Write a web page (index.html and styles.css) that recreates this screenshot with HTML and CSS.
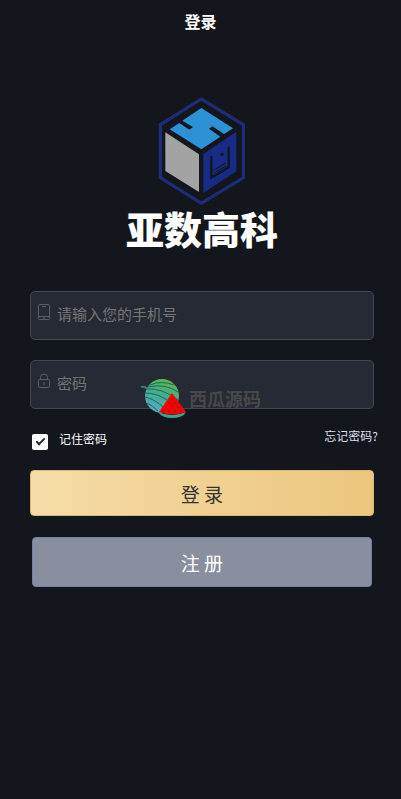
FILE: index.html
```html
<!DOCTYPE html>
<html lang="zh-CN">
<head>
  <meta charset="UTF-8">
  <meta name="viewport" content="width=device-width, initial-scale=1.0">
  <title>登录</title>
  <link rel="stylesheet" href="styles.css">
</head>
<body>
  <header class="top-nav">
    <h1>登录</h1>
  </header>

  <main class="login">
    <div class="logo">
      <svg class="logo-mark" viewBox="0 0 300 354" aria-hidden="true">
        <path d="M148 21 L274 98 V257 L148 334 L25 257 V98 Z" fill="none" stroke="#34384f" stroke-width="9"/>
        <path d="M148 21 L274 98 V257 L148 334 L25 257 V98 Z" fill="none" stroke="#182b88" stroke-width="7"/>
        <path d="M148 48 L243 109 L216 126 L181 103 L171 110 L205 134 L148 172 L53 112 L82 93 L112 113 L123 105 L91 86 Z" fill="#2b93d5"/>
        <path d="M40 121 L141 187 V300 L40 237 Z" fill="#a3a3a3"/>
        <path d="M154 186 L253 119 V238 L154 303 Z" fill="#182b86"/>
        <path d="M178 193 V257 L230 226 V164" fill="none" stroke="#11151f" stroke-width="7"/>
        <path d="M187 233 L222 213 M187 243 L222 222" fill="none" stroke="#11151f" stroke-width="3"/>
        <circle cx="210" cy="187" r="5" fill="#11151f"/>
      </svg>
      <div class="logo-name">亚数高科</div>
    </div>

    <form class="login-form">
      <div class="field">
        <label for="phone" aria-label="手机号">
          <svg class="field-icon" viewBox="0 0 14 18" aria-hidden="true">
            <rect x="1.5" y="1.5" width="11" height="15" rx="1"/>
            <path d="M5 3.5h4M2 13.5h10M6 15h2"/>
          </svg>
        </label>
        <input type="tel" id="phone" placeholder="请输入您的手机号">
      </div>

      <div class="field">
        <label for="password" aria-label="密码">
          <svg class="field-icon" viewBox="0 0 14 18" aria-hidden="true">
            <rect x="1.5" y="7.5" width="11" height="8" rx="1"/>
            <path d="M3.5 7V5.5a3.5 3.5 0 0 1 7 0V7M7 10v3"/>
          </svg>
        </label>
        <input type="password" id="password" placeholder="密码">
        <div class="watermark">
          <svg viewBox="0 0 46 42" aria-hidden="true">
            <defs>
              <linearGradient id="melon" x1="0.7" y1="0" x2="0.3" y2="1">
                <stop offset="0" stop-color="#62b843"/>
                <stop offset="0.5" stop-color="#3fae91"/>
                <stop offset="1" stop-color="#56a9c6"/>
              </linearGradient>
            </defs>
            <circle cx="21" cy="19" r="17" fill="url(#melon)"/>
            <g fill="none" stroke="#22675d" stroke-width="1">
              <path d="M9 8Q20 3 33 8M7 10Q24 6 37 15M5 12Q22 11 37 23M4 16Q17 16 29 25M4 20Q14 22 23 31M6 26Q12 29 17 34"/>
            </g>
            <path d="M0 10Q3 9 7 12" fill="none" stroke="#317e7d" stroke-width="2"/>
            <path d="M17 35Q31 41 45 35Q42 41 31 41Q21 41 17 35Z" fill="#31a796"/>
            <path d="M31 16L45 35Q31 40 18 35Z" fill="#fb0000"/>
            <g fill="#7b1018">
              <circle cx="31" cy="22" r="0.7"/><circle cx="28" cy="26" r="0.7"/><circle cx="34" cy="26" r="0.7"/>
              <circle cx="25" cy="30" r="0.7"/><circle cx="31" cy="30" r="0.7"/><circle cx="37" cy="30" r="0.7"/>
              <circle cx="22" cy="34" r="0.7"/><circle cx="28" cy="34" r="0.7"/><circle cx="34" cy="34" r="0.7"/><circle cx="40" cy="34" r="0.7"/>
            </g>
          </svg>
          <span>西瓜源码</span>
        </div>
      </div>

      <div class="options">
        <label class="remember">
          <input type="checkbox" checked>
          <span>记住密码</span>
        </label>
        <a class="forgot" href="#">忘记密码?</a>
      </div>

      <button type="submit" class="btn btn-login">登 录</button>
      <button type="button" class="btn btn-register">注 册</button>
    </form>
  </main>
</body>
</html>
```
FILE: styles.css
```css
* {
  box-sizing: border-box;
}

body {
  margin: 0;
  min-height: 100vh;
  background-color: #13161d;
  color: #fff;
  font-family: "Noto Sans CJK SC", sans-serif;
}

.top-nav {
  height: 44px;
  text-align: center;
}

.top-nav h1 {
  margin: 0;
  font-size: 16px;
  line-height: 42px;
  font-weight: 700;
}

.login {
  padding: 48px 27px 0 30px;
}

.logo {
  display: flex;
  flex-direction: column;
  align-items: center;
}

.logo-mark {
  width: 100px;
  height: 118px;
}

.logo-name {
  font-size: 38px;
  line-height: 36px;
  font-weight: 900;
}

.login-form {
  display: flex;
  flex-direction: column;
  margin-top: 45px;
}

.field {
  position: relative;
  display: flex;
  align-items: flex-start;
  height: 49px;
  margin-bottom: 20px;
  padding: 11px 6px 0;
  background-color: #262a35;
  border: 1px solid #434754;
  border-radius: 5px;
}

.field label {
  height: 18px;
}

.field-icon {
  display: block;
  width: 14px;
  height: 18px;
  fill: none;
  stroke: #5b5e65;
  stroke-width: 1;
}

.field input {
  flex: 1;
  min-width: 0;
  height: 20px;
  margin-left: 6px;
  padding: 0;
  border: none;
  outline: none;
  background: transparent;
  color: #fff;
  font-family: inherit;
  font-size: 15px;
}

.field input::placeholder {
  color: #757575;
  opacity: 1;
}

.watermark {
  position: absolute;
  left: 110px;
  top: 16px;
  display: flex;
  align-items: center;
  gap: 2px;
  color: #484848;
  font-size: 18px;
  font-weight: 700;
  line-height: 42px;
  pointer-events: none;
}

.watermark svg {
  width: 46px;
  height: 42px;
}

.options {
  display: flex;
  justify-content: space-between;
  align-items: flex-start;
  height: 41px;
  margin: 0 -4px 0 2px;
  font-size: 12px;
  line-height: 20px;
}

.remember {
  display: flex;
  gap: 11px;
}

.remember input {
  appearance: none;
  display: flex;
  justify-content: center;
  width: 16px;
  height: 16px;
  margin: 5px 0 0;
  border-radius: 2px;
  background-color: #fff;
}

.remember input:checked::before {
  content: "";
  width: 7px;
  height: 3px;
  margin-top: 4px;
  border: solid #262a35;
  border-width: 0 0 2px 2px;
  transform: rotate(-45deg);
}

.forgot {
  margin-top: -3px;
  color: #dcdfea;
  text-decoration: none;
}

.btn {
  border-radius: 4px;
  font-family: inherit;
  font-size: 19px;
  cursor: pointer;
}

.btn-login {
  height: 46px;
  border: 1px solid #d9b778;
  background: linear-gradient(to right, #f5dca8, #edc67e);
  color: #333;
}

.btn-register {
  height: 50px;
  margin: 21px 2px 0;
  border: 1px solid #6f82ad;
  background-color: #898f9e;
  color: #fff;
}
```
